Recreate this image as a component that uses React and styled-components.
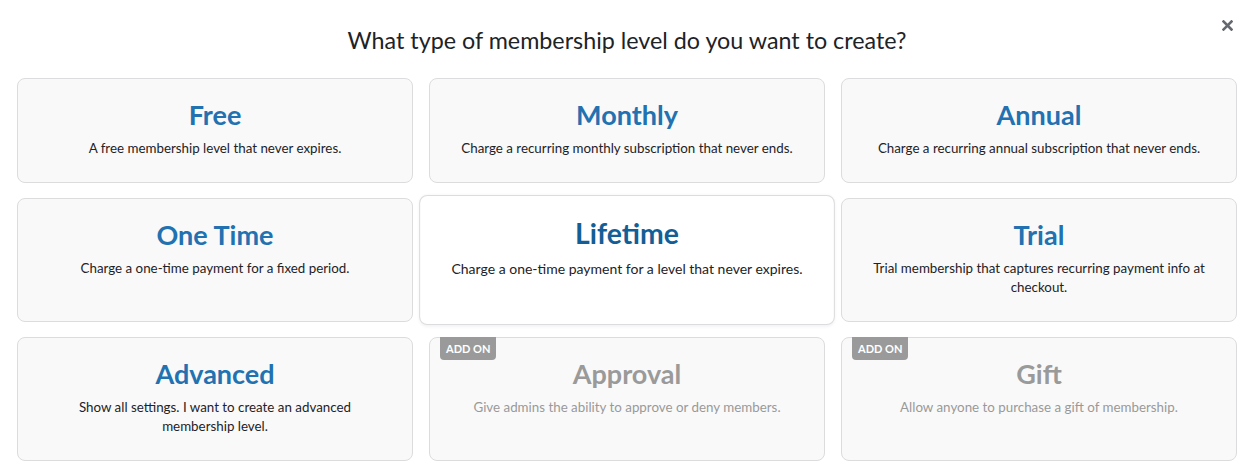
import React from "react";
import styled, { createGlobalStyle, css } from "styled-components";

const Global = createGlobalStyle`
  html, body { margin: 0; padding: 0; background: #fff; }
  body { font-family: Lato, "Noto Sans", sans-serif; color: #1d2327; }
  * { box-sizing: border-box; }
`;

const Modal = styled.div`
  position: relative;
  padding: 24px 17px 14px;
`;

const Heading = styled.h2`
  margin: 0 0 22px;
  font-size: 23.3px;
  line-height: 32px;
  font-weight: 400;
  text-align: center;
  color: #1d2327;
`;

const Close = styled.button`
  position: absolute;
  top: 18px;
  right: 20px;
  width: 14px;
  height: 14px;
  padding: 0;
  border: 0;
  background: none;
  cursor: pointer;
  display: flex;
  align-items: center;
  justify-content: center;
`;

const Grid = styled.div`
  display: grid;
  grid-template-columns: repeat(3, 1fr);
  column-gap: 16px;
  row-gap: 15px;
`;

const Card = styled.div`
  position: relative;
  background: #f9f9f9;
  border: 1px solid #dcdcde;
  border-radius: 8px;
  padding: 19px 28px 24px;
  text-align: center;
  cursor: pointer;
  ${(p) =>
    p.$active &&
    css`
      background: #fff;
      transform: scale(1.05);
      box-shadow: 0 1px 3px rgba(0, 0, 0, 0.05);
      z-index: 1;
    `}
`;

const Title = styled.h3`
  margin: 0 0 7px;
  font-size: 27px;
  line-height: 34px;
  font-weight: 700;
  color: ${(p) => (p.$addon ? "#9a9a9a" : p.$active ? "#135e96" : "#2271b1")};
`;

const Desc = styled.p`
  margin: 0;
  font-size: 13.35px;
  line-height: 19px;
  color: ${(p) => (p.$addon ? "#999" : "#1d2327")};
`;

const Badge = styled.span`
  position: absolute;
  top: -1px;
  left: 10px;
  background: #9a9a9a;
  color: #fff;
  font-size: 11px;
  font-weight: 700;
  line-height: 17px;
  padding: 3px 6px;
  border-radius: 0 0 4px 4px;
`;

const levels = [
  { t: "Free", d: "A free membership level that never expires." },
  { t: "Monthly", d: "Charge a recurring monthly subscription that never ends." },
  { t: "Annual", d: "Charge a recurring annual subscription that never ends." },
  { t: "One Time", d: "Charge a one-time payment for a fixed period." },
  { t: "Lifetime", d: "Charge a one-time payment for a level that never expires.", active: true },
  { t: "Trial", d: "Trial membership that captures recurring payment info at checkout." },
  { t: "Advanced", d: "Show all settings. I want to create an advanced membership level." },
  { t: "Approval", d: "Give admins the ability to approve or deny members.", addon: true },
  { t: "Gift", d: "Allow anyone to purchase a gift of membership.", addon: true },
];

export default function App() {
  return (
    <>
      <Global />
      <Modal>
        <Close aria-label="Close">
          <svg width="11" height="11" viewBox="0 0 11 11">
            <path d="M1.5 1.5 L9.5 9.5 M9.5 1.5 L1.5 9.5" stroke="#646970" strokeWidth="2.6" strokeLinecap="square" />
          </svg>
        </Close>
        <Heading>What type of membership level do you want to create?</Heading>
        <Grid>
          {levels.map((l) => (
            <Card key={l.t} $active={l.active}>
              {l.addon && <Badge>ADD ON</Badge>}
              <Title $active={l.active} $addon={l.addon}>{l.t}</Title>
              <Desc $addon={l.addon}>{l.d}</Desc>
            </Card>
          ))}
        </Grid>
      </Modal>
    </>
  );
}
